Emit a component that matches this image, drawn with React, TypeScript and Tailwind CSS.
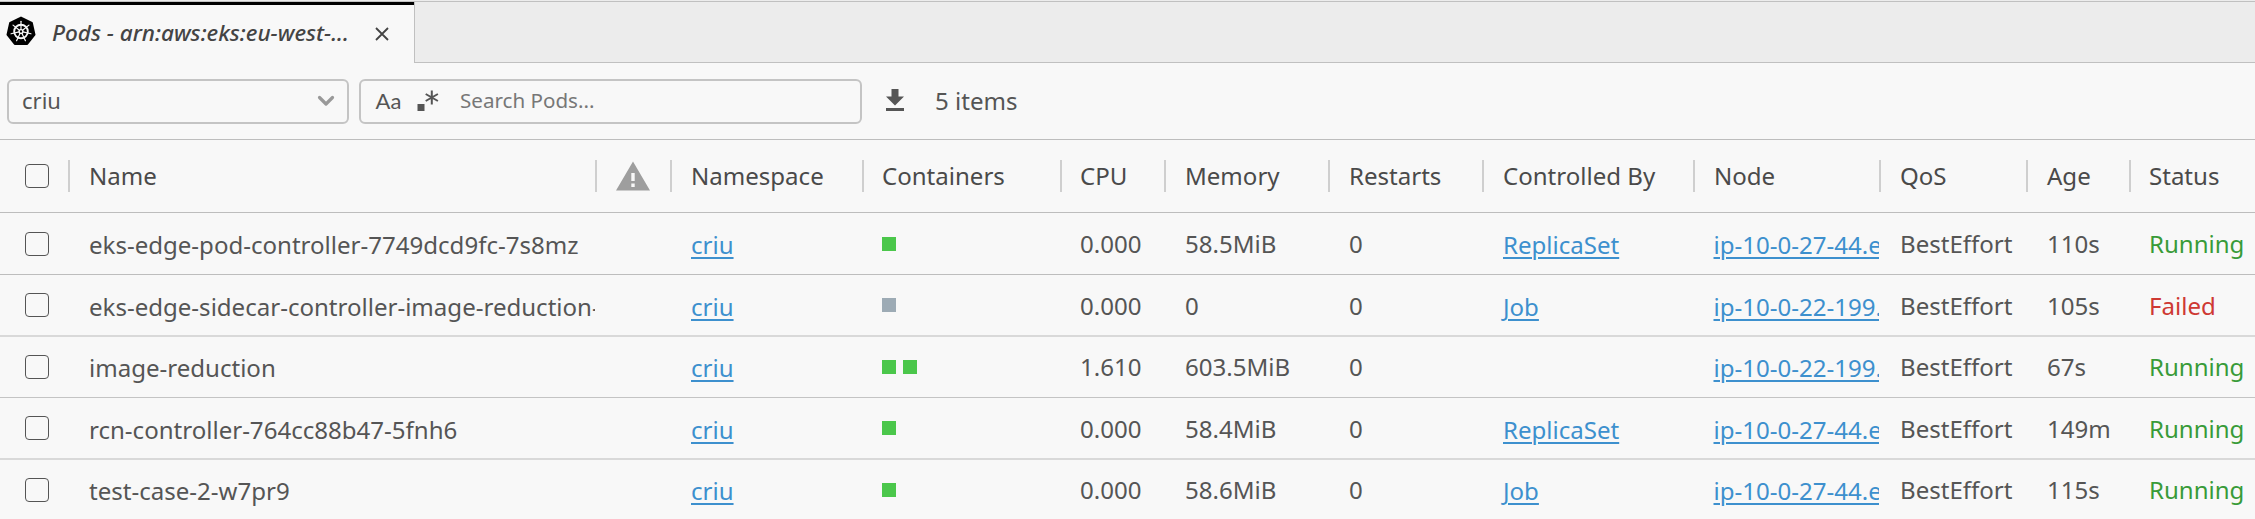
import React from "react";

const cols = "grid grid-cols-[70px_527px_75px_192px_198px_104px_164px_154px_211px_186px_147px_103px_124px]";

type Pod = {
  name: string;
  containers: string[];
  cpu: string;
  memory: string;
  owner: string;
  node: string;
  age: string;
  status: string;
  row: string;
  text: string;
};

const pods: Pod[] = [
  { name: "eks-edge-pod-controller-7749dcd9fc-7s8mz", containers: ["g"], cpu: "0.000", memory: "58.5MiB", owner: "ReplicaSet", node: "ip-10-0-27-44.eu-west-1", age: "110s", status: "Running", row: "h-[62px] border-b border-[#bdbdbd]", text: "" },
  { name: "eks-edge-sidecar-controller-image-reduction-job", containers: ["x"], cpu: "0.000", memory: "0", owner: "Job", node: "ip-10-0-22-199.eu-west-1", age: "105s", status: "Failed", row: "h-[62px] border-b-2 border-[#d9d9d9]", text: "mt-[2px]" },
  { name: "image-reduction", containers: ["g", "g"], cpu: "1.610", memory: "603.5MiB", owner: "", node: "ip-10-0-22-199.eu-west-1", age: "67s", status: "Running", row: "h-[61px] border-b border-[#c4c4c4]", text: "" },
  { name: "rcn-controller-764cc88b47-5fnh6", containers: ["g"], cpu: "0.000", memory: "58.4MiB", owner: "ReplicaSet", node: "ip-10-0-27-44.eu-west-1", age: "149m", status: "Running", row: "h-[62px] border-b-2 border-[#d9d9d9]", text: "mt-[2px]" },
  { name: "test-case-2-w7pr9", containers: ["g"], cpu: "0.000", memory: "58.6MiB", owner: "Job", node: "ip-10-0-27-44.eu-west-1", age: "115s", status: "Running", row: "h-[60px]", text: "" },
];

const headers = ["Name", "", "Namespace", "Containers", "CPU", "Memory", "Restarts", "Controlled By", "Node", "QoS", "Age", "Status"];

function KubernetesIcon() {
  const spokes = [0, 1, 2, 3, 4, 5, 6].map((i) => (i * 360) / 7);
  return (
    <svg viewBox="0 0 30 30" className="mb-[6px] size-[30px] shrink-0">
      <path d="M15 1.600 25.800 6.800 28.500 18.600 21.200 28H8.800L1.500 18.600 4.200 6.800Z" fill="#000" stroke="#000" strokeWidth="2" strokeLinejoin="round" />
      <g stroke="#f8f8f8" fill="none" strokeLinecap="round">
        <circle cx="15" cy="15.500" r="6.800" strokeWidth="1.900" />
        {spokes.map((a) => (
          <path key={a} d="M15 13.500V5.300" strokeWidth="1.200" transform={`rotate(${a} 15 15.500)`} />
        ))}
        <circle cx="15" cy="15.500" r="1.900" strokeWidth="1.400" />
      </g>
    </svg>
  );
}

function Checkbox() {
  return <span className="ml-[25px] block size-6 rounded-[4px] border border-[#555]" />;
}

function Cell({ children, className = "" }: { children?: React.ReactNode; className?: string }) {
  return <div className={`overflow-hidden whitespace-nowrap ${className}`}>{children}</div>;
}

function Link({ children }: { children: string }) {
  return <a className="text-[#3d90ce] underline decoration-2 underline-offset-[3px]">{children}</a>;
}

export default function App() {
  return (
    <div className="h-[519px] w-[2255px] overflow-hidden bg-[#f8f8f8] font-['Noto_Sans',sans-serif] text-[24.05px] leading-[34px] text-[#555]">
      <div className="flex h-[63px] border-t border-[#ececec]">
        <div className="flex w-[414px] flex-col border-t border-[#c4c4c4]">
          <div className="flex flex-1 items-center border-t-[3px] border-black pl-[6px]">
            <KubernetesIcon />
            <span className="mb-[3px] ml-4 w-[298px] whitespace-nowrap text-[22.5px] font-medium italic text-[#444]">Pods - arn:aws:eks:eu-west-...</span>
            <svg viewBox="0 0 14 14" className="ml-[25px] size-[14px]" stroke="#444" strokeWidth="1.8"><path d="m1 1 12 12M13 1 1 13" /></svg>
          </div>
        </div>
        <div className="flex-1 border border-r-0 border-[#c0c0c0] bg-[#ececec]" />
      </div>

      <div className="flex h-[77px] items-center border-b border-[#bdbdbd] pl-[7px]">
        <div className="flex h-[45px] w-[342px] items-center justify-between rounded-[6px] border-2 border-[#c4c4c4] pl-[13px] pr-[12px] text-[22px]">
          <span className="mb-[2px]">criu</span>
          <svg viewBox="0 0 18 12" className="h-3 w-[18px]" fill="none" stroke="#999" strokeWidth="3.2" strokeLinecap="round" strokeLinejoin="round"><path d="m2.500 2.500 6.500 6.500 6.500-6.500" /></svg>
        </div>
        <div className="ml-[10px] flex h-[45px] w-[503px] items-center rounded-[6px] border-2 border-[#c4c4c4] pl-[14px] text-[20.6px]">
          <svg viewBox="0 0 26 20" className="h-5 w-[26px] overflow-visible" fill="#555"><text x="0.500" y="18" fontSize="22" fontFamily="Lato">Aa</text></svg>
          <svg viewBox="0 0 23 22" className="ml-[15px] h-[22px] w-[23px]"><path d="M1.500 14h7v7h-7z" fill="#555" /><path d="M15.800 .5v14M9.700 4l12.200 7M21.900 4l-12.200 7" stroke="#555" strokeWidth="2" /></svg>
          <span className="mb-[2px] ml-[21px] text-[#777]">Search Pods...</span>
        </div>
        <svg viewBox="0 0 18 22" className="mb-[2px] ml-[24px] h-[22px] w-[18px]" fill="#555"><path d="M5.500 0h7v7.500H18L9 16.500 0 7.500h5.500zM0 19h18v3H0z" /></svg>
        <span className="ml-[31px]">5 items</span>
      </div>

      <div className={`${cols} h-[73px] items-center border-b border-[#bdbdbd] text-[#4a4a4a]`}>
        <div className="flex h-8 items-center border-r-2 border-[#cfcfcf]"><Checkbox /></div>
        {headers.map((h, i) => (
          <div key={i} className={`flex h-8 items-center whitespace-nowrap ${i === 3 || i === 4 || i === 11 ? "pl-[18px]" : "pl-[19px]"} ${i < 11 ? "border-r-2 border-[#cfcfcf]" : ""}`}>
            {i === 1 ? (
              <svg viewBox="0 0 34 30" className="h-[30px] w-[34px] shrink-0" fill="#9e9e9e"><path fillRule="evenodd" d="M17 .5 34 29.500H0zM15.300 12v8h3.400v-8zM15.300 22.500v3.400h3.400v-3.400z" /></svg>
            ) : (
              <span>{h}</span>
            )}
          </div>
        ))}
      </div>

      {pods.map((p) => (
        <div key={p.name} className={`${cols} ${p.row} items-center`}>
          <Checkbox />
          <Cell className={`mr-[2px] pl-[19px] pt-[2px] ${p.text}`}>{p.name}</Cell>
          <Cell />
          <Cell className={`pl-[19px] pt-[2px] ${p.text}`}><Link>criu</Link></Cell>
          <div className="flex gap-[7px] pl-[18px]">
            {p.containers.map((c, i) => (
              <span key={i} className={`size-[14px] ${c === "g" ? "bg-[#4bc74b]" : "bg-[#9dabb5]"}`} />
            ))}
          </div>
          <Cell className={`pl-[18px] ${p.text}`}>{p.cpu}</Cell>
          <Cell className={`pl-[19px] ${p.text}`}>{p.memory}</Cell>
          <Cell className={`pl-[19px] ${p.text}`}>0</Cell>
          <Cell className={`pl-[19px] pt-[2px] ${p.text}`}>{p.owner && <Link>{p.owner}</Link>}</Cell>
          <Cell className={`mr-[2px] pl-[18.5px] pt-[2px] ${p.text}`}><Link>{p.node}</Link></Cell>
          <Cell className={`pl-[19px] ${p.text}`}>BestEffort</Cell>
          <Cell className={`pl-[19px] ${p.text}`}>{p.age}</Cell>
          <Cell className={`pl-[18px] ${p.text} ${p.status === "Failed" ? "text-[#ce3933]" : "text-[#389b38]"}`}>{p.status}</Cell>
        </div>
      ))}
    </div>
  );
}
